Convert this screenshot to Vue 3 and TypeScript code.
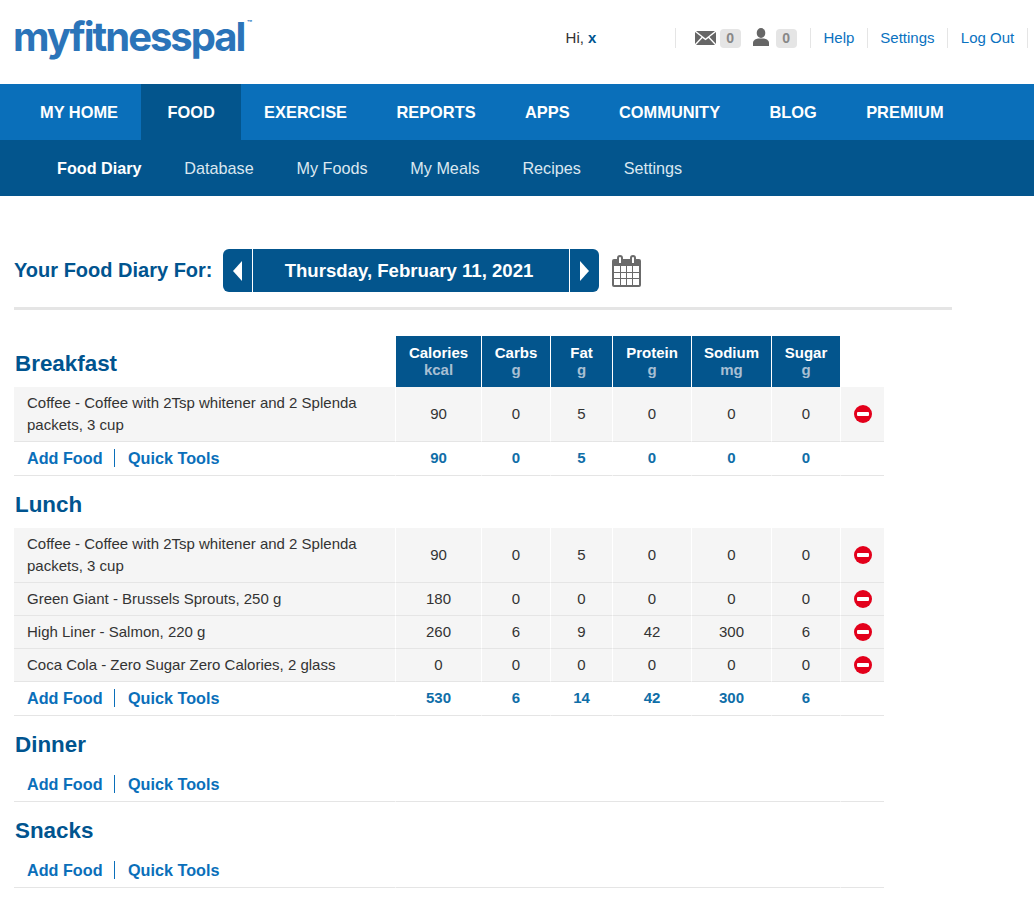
<script setup lang="ts">
type Food = {
  name: string
  values: number[]
}

type Meal = {
  title: string
  foods: Food[]
  totals: number[]
}

const coffee = 'Coffee - Coffee with 2Tsp whitener and 2 Splenda packets, 3 cup'

const mainNav = ['MY HOME', 'FOOD', 'EXERCISE', 'REPORTS', 'APPS', 'COMMUNITY', 'BLOG', 'PREMIUM']
const subNav = ['Food Diary', 'Database', 'My Foods', 'My Meals', 'Recipes', 'Settings']

const columns = [
  { label: 'Calories', unit: 'kcal' },
  { label: 'Carbs', unit: 'g' },
  { label: 'Fat', unit: 'g' },
  { label: 'Protein', unit: 'g' },
  { label: 'Sodium', unit: 'mg' },
  { label: 'Sugar', unit: 'g' },
]

const meals: Meal[] = [
  {
    title: 'Breakfast',
    foods: [{ name: coffee, values: [90, 0, 5, 0, 0, 0] }],
    totals: [90, 0, 5, 0, 0, 0],
  },
  {
    title: 'Lunch',
    foods: [
      { name: coffee, values: [90, 0, 5, 0, 0, 0] },
      { name: 'Green Giant - Brussels Sprouts, 250 g', values: [180, 0, 0, 0, 0, 0] },
      { name: 'High Liner - Salmon, 220 g', values: [260, 6, 9, 42, 300, 6] },
      { name: 'Coca Cola - Zero Sugar Zero Calories, 2 glass', values: [0, 0, 0, 0, 0, 0] },
    ],
    totals: [530, 6, 14, 42, 300, 6],
  },
  { title: 'Dinner', foods: [], totals: [] },
  { title: 'Snacks', foods: [], totals: [] },
]
</script>

<template>
  <div class="page">
    <header class="top">
      <div class="logo">myfitnesspal<span class="tm">™</span></div>
      <div class="user">
        <div class="hello">Hi, <b>x</b></div>
        <div class="counts">
          <svg class="mail" width="21" height="14" viewBox="0 0 21 14">
            <path d="M1 0h19L10.500 7.500z" fill="#666" />
            <path d="M0 1v12l6.500-7zM21 1v12l-6.500-7z" fill="#666" />
            <path d="M1 14l6.500-7 3 2.300 3-2.300 6.500 7z" fill="#666" />
          </svg>
          <span class="badge">0</span>
          <svg class="person" width="16" height="18" viewBox="0 0 16 18">
            <ellipse cx="8" cy="5" rx="4.300" ry="5" fill="#666" />
            <path d="M0 18v-3c0-3 3-4 5-4.500h6c2 .5 5 1.500 5 4.500v3z" fill="#666" />
          </svg>
          <span class="badge">0</span>
        </div>
        <a class="top-link">Help</a>
        <a class="top-link">Settings</a>
        <a class="top-link">Log Out</a>
      </div>
    </header>

    <nav class="main-nav">
      <a
        v-for="item in mainNav"
        :key="item"
        :class="{ active: item === 'FOOD' }"
      >
        {{ item }}
      </a>
    </nav>

    <nav class="sub-nav">
      <a
        v-for="item in subNav"
        :key="item"
        :class="{ active: item === 'Food Diary' }"
      >
        {{ item }}
      </a>
    </nav>

    <main class="content">
      <div class="date-row">
        <h1>Your Food Diary For:</h1>
        <div class="date-nav">
          <a class="arrow">
            <svg width="11" height="20" viewBox="0 0 11 20"><path d="M10 0v20L1 10z" fill="#fff" /></svg>
          </a>
          <div class="date">Thursday, February 11, 2021</div>
          <a class="arrow right">
            <svg width="11" height="20" viewBox="0 0 11 20"><path d="M1 0v20l9-10z" fill="#fff" /></svg>
          </a>
        </div>
        <svg class="calendar" width="30" height="32" viewBox="0 0 30 32">
          <rect x="0" y="4" width="29" height="28" rx="2" fill="#6b6b6b" />
          <path d="M6 8V3a2 2 0 0 1 4 0v5M19 8V3a2 2 0 0 1 4 0v5" fill="#fff" stroke="#6b6b6b" stroke-width="2" />
          <g fill="#fff">
            <rect x="2" y="11" width="6" height="6" />
            <rect x="9" y="11" width="5" height="6" />
            <rect x="15" y="11" width="5" height="6" />
            <rect x="21" y="11" width="6" height="6" />
            <rect x="2" y="18" width="6" height="5" />
            <rect x="9" y="18" width="5" height="5" />
            <rect x="15" y="18" width="5" height="5" />
            <rect x="21" y="18" width="6" height="5" />
            <rect x="2" y="24" width="6" height="6" />
            <rect x="9" y="24" width="5" height="6" />
            <rect x="15" y="24" width="5" height="6" />
            <rect x="21" y="24" width="6" height="6" />
          </g>
        </svg>
      </div>

      <table class="diary">
        <colgroup>
          <col style="width: 382px" />
          <col style="width: 86px" />
          <col style="width: 69px" />
          <col style="width: 62px" />
          <col style="width: 79px" />
          <col style="width: 80px" />
          <col style="width: 69px" />
          <col style="width: 43px" />
        </colgroup>
        <tbody
          v-for="(meal, index) in meals"
          :key="meal.title"
        >
          <tr class="meal-head" :class="{ first: index === 0 }">
            <td class="meal-title">{{ meal.title }}</td>
            <template v-if="index === 0">
              <th
                v-for="col in columns"
                :key="col.label"
              >
                {{ col.label }}
                <span>{{ col.unit }}</span>
              </th>
            </template>
            <td v-else colspan="6"></td>
            <td></td>
          </tr>

          <tr
            v-for="(food, foodIndex) in meal.foods"
            :key="foodIndex"
            class="food"
          >
            <td class="name">{{ food.name }}</td>
            <td
              v-for="(value, i) in food.values"
              :key="i"
            >
              {{ value }}
            </td>
            <td>
              <svg class="remove" width="18" height="18" viewBox="0 0 18 18">
                <circle cx="9" cy="9" r="9" fill="#e3001b" />
                <rect x="3" y="7" width="12" height="4" rx="1" fill="#fff" />
              </svg>
            </td>
          </tr>

          <tr class="total">
            <td class="actions">
              <a class="add">Add Food</a><a class="tools">Quick Tools</a>
            </td>
            <template v-if="meal.totals.length">
              <td
                v-for="(value, i) in meal.totals"
                :key="i"
              >
                {{ value }}
              </td>
            </template>
            <td v-else colspan="6"></td>
            <td></td>
          </tr>
        </tbody>
      </table>
    </main>
  </div>
</template>

<style>
html,
body {
  margin: 0;
  background: #fff;
}
</style>

<style scoped>
.page {
  width: 1034px;
  font-family: "Liberation Sans", Arial, sans-serif;
  color: #333;
  overflow: hidden;
}

.top {
  height: 84px;
  display: flex;
  justify-content: space-between;
  align-items: flex-start;
  padding-left: 13px;
  padding-right: 6px;
}

.logo {
  position: relative;
  margin-top: 13px;
  font-family: Inter, "Liberation Sans", sans-serif;
  font-size: 40px;
  line-height: 48px;
  font-weight: 700;
  letter-spacing: -2px;
  color: #2b74b9;
}

.tm {
  position: absolute;
  left: 234px;
  top: -14px;
  font-size: 8px;
  letter-spacing: 0;
}

.user {
  display: flex;
  align-items: center;
  height: 20px;
  margin-top: 28px;
  font-size: 15px;
}

.hello {
  width: 109px;
  height: 20px;
  padding-left: 1px;
  line-height: 20px;
  border-right: 1px solid #e5e5e5;
}

.hello b {
  color: #00548f;
}

.counts {
  display: flex;
  align-items: center;
  height: 20px;
  padding: 0 13.400px 0 19px;
  border-right: 1px solid #e5e5e5;
}

.mail {
  margin-right: 4px;
}

.person {
  margin: -3px 7px 0 12px;
}

.badge {
  width: 21px;
  height: 19px;
  border-radius: 4px;
  background: #e5e5e5;
  color: #888;
  font-weight: 700;
  font-size: 14px;
  line-height: 19px;
  text-align: center;
}

.top-link {
  height: 20px;
  line-height: 20px;
  padding: 0 12.500px;
  border-right: 1px solid #e5e5e5;
  color: #0a72c0;
}

.top-link:last-child {
  padding: 0 12.800px;
}

.main-nav {
  height: 56px;
  display: flex;
  padding-left: 15.300px;
  background: #0a6fba;
}

.main-nav a {
  box-sizing: border-box;
  height: 56px;
  padding: 1px 24.700px 0;
  line-height: 55px;
  font-size: 16.400px;
  font-weight: 700;
  color: #fff;
}

.main-nav a.active {
  margin: 0 -1.500px;
  padding: 1px 26.200px 0;
  background: #03558d;
}

.sub-nav {
  height: 56px;
  display: flex;
  gap: 42.800px;
  padding-left: 57px;
  background: #03558d;
}

.sub-nav a {
  box-sizing: border-box;
  height: 56px;
  padding-top: 1px;
  line-height: 55px;
  font-size: 16.200px;
  color: #dbe7f0;
}

.sub-nav a.active {
  font-weight: 700;
  color: #fff;
}

.content {
  padding: 53px 0 0 14px;
}

.date-row {
  width: 938px;
  display: flex;
  align-items: center;
  height: 43px;
  padding-bottom: 15px;
  border-bottom: 3px solid #e5e5e5;
  margin-bottom: 26px;
}

h1 {
  margin: 0 10px 0 0;
  width: 199px;
  font-size: 20px;
  font-weight: 700;
  color: #00548f;
  white-space: nowrap;
}

.date-nav {
  width: 376px;
  height: 43px;
  display: flex;
  border-radius: 6px;
  background: #03558d;
}

.arrow {
  width: 29px;
  display: flex;
  align-items: center;
  justify-content: center;
  border-right: 1px solid #fff;
}

.arrow.right {
  border-right: 0;
  border-left: 1px solid #fff;
}

.date {
  flex: 1;
  padding-right: 4px;
  text-align: center;
  font-size: 18.600px;
  font-weight: 700;
  line-height: 43px;
  color: #fff;
}

.calendar {
  margin-left: 13px;
}

.diary {
  width: 870px;
  table-layout: fixed;
  border-collapse: separate;
  border-spacing: 0;
  font-size: 15px;
}

.diary td,
.diary th {
  padding: 0;
  text-align: center;
}

.meal-head {
  height: 52px;
}

.meal-head.first {
  height: 51px;
}

.diary .meal-title {
  vertical-align: bottom;
  padding: 0 0 10px 1px;
  text-align: left;
  font-size: 22.400px;
  line-height: 26px;
  font-weight: 700;
  color: #00548f;
}

.diary th {
  padding-bottom: 2px;
  border-right: 1px solid #fff;
  background: #03558d;
  color: #fff;
  font-size: 15px;
  font-weight: 700;
  line-height: 17px;
  vertical-align: middle;
}

.diary th span {
  display: block;
  color: #a8bfd3;
}

.food td {
  padding: 5px 0;
  line-height: 22px;
  background: #f5f5f5;
  border-right: 1px solid #fff;
  border-bottom: 1px solid #e5e5e5;
}

.food td:last-child,
.total td:last-child {
  border-right: 0;
}

.diary .food .name {
  padding: 5px 13px;
  text-align: left;
}

.remove {
  display: block;
  margin-left: 13px;
}

.total td {
  height: 33px;
  border-right: 1px solid #fff;
  border-bottom: 1px solid #e5e5e5;
  font-weight: 700;
  line-height: 31px;
  vertical-align: top;
  color: #0f6ea8;
}

.diary .actions {
  padding-left: 13px;
  text-align: left;
  font-size: 16.200px;
  line-height: 33px;
  vertical-align: middle;
}

.actions a {
  display: inline-block;
  height: 18px;
  line-height: 18px;
  color: #0a6fba;
}

.add {
  padding-right: 11.500px;
  border-right: 1px solid #0a6fba;
}

.tools {
  padding-left: 13px;
}
</style>
